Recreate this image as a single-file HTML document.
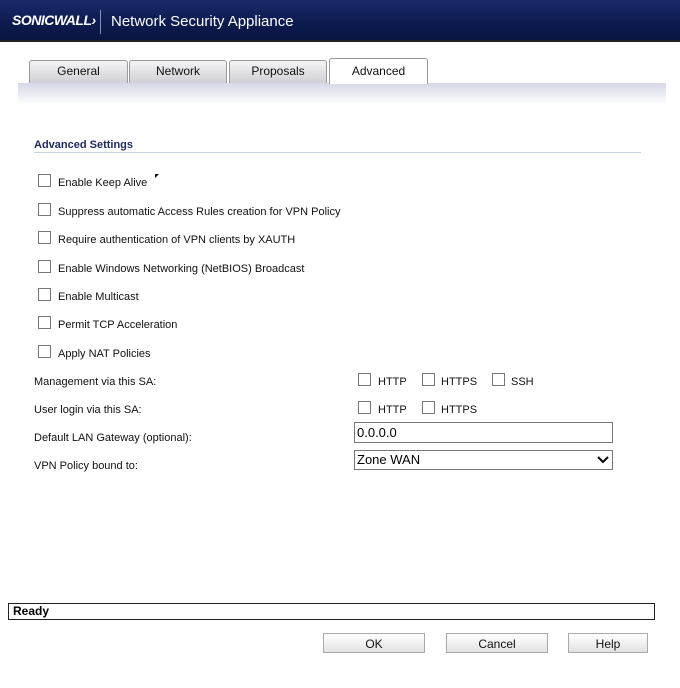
<!DOCTYPE html>
<html><head><style>
body{margin:0;width:680px;height:688px;background:#fff;position:relative;font-family:"Liberation Sans",Arial,sans-serif;overflow:hidden}
.a{position:absolute}
.hdr{left:0;top:0;width:680px;height:40px;background:linear-gradient(#1a2a6a,#0d1a4e 60%,#0a1540);border-bottom:2px solid #222}
.logo{left:12px;top:12px;color:#fff;font-weight:bold;font-style:italic;font-size:14px;letter-spacing:-0.5px}
.sep{left:100px;top:10px;width:1px;height:24px;background:#8890b0}
.title{left:111px;top:13px;color:#fff;font-size:15px}
.tab{top:60px;height:23px;border:1px solid #999;border-bottom:none;border-radius:3px 3px 0 0;background:linear-gradient(#f4f4f4,#cfcfd6);font-size:12px;text-align:center;line-height:20px;color:#111;box-sizing:border-box}
.band{left:18px;top:83px;width:648px;height:22px;background:linear-gradient(#d5d8e6,#fff)}
.cb{width:11px;height:11px;border:1px solid #777;background:#fff}
.t{font-size:11px;color:#111;white-space:nowrap}
.btn{top:633px;height:20px;border:1px solid #aaa;background:linear-gradient(#fff,#e2e2e2);font-size:12px;text-align:center;line-height:20px;box-sizing:border-box;color:#111}
</style></head><body>
<div class="a hdr"></div>
<div class="a logo">SONICWALL&#x203A;</div>
<div class="a sep"></div>
<div class="a title">Network Security Appliance</div>
<div class="a band"></div>
<div class="a tab" style="left:29px;width:99px">General</div>
<div class="a tab" style="left:129px;width:98px">Network</div>
<div class="a tab" style="left:229px;width:98px">Proposals</div>
<div class="a tab" style="left:329px;width:99px;top:58px;height:26px;background:#fff;line-height:24px">Advanced</div>
<div class="a" style="left:34px;top:139px;font-size:11px;font-weight:bold;color:#1c2a5a">Advanced Settings</div>
<div class="a" style="left:34px;top:152px;width:607px;height:1px;background:#c8d4e4"></div>
<div class="a" style="left:155px;top:174px;width:0;height:0;border-left:4px solid #000;border-bottom:4px solid transparent"></div>

<div class="a cb" style="left:38px;top:174px"></div><div class="a t" style="left:58px;top:177px">Enable Keep Alive</div>
<div class="a cb" style="left:38px;top:203px"></div><div class="a t" style="left:58px;top:206px">Suppress automatic Access Rules creation for VPN Policy</div>
<div class="a cb" style="left:38px;top:231px"></div><div class="a t" style="left:58px;top:234px">Require authentication of VPN clients by XAUTH</div>
<div class="a cb" style="left:38px;top:260px"></div><div class="a t" style="left:58px;top:263px">Enable Windows Networking (NetBIOS) Broadcast</div>
<div class="a cb" style="left:38px;top:288px"></div><div class="a t" style="left:58px;top:291px">Enable Multicast</div>
<div class="a cb" style="left:38px;top:316px"></div><div class="a t" style="left:58px;top:319px">Permit TCP Acceleration</div>
<div class="a cb" style="left:38px;top:345px"></div><div class="a t" style="left:58px;top:348px">Apply NAT Policies</div>

<div class="a t" style="left:34px;top:376px">Management via this SA:</div>
<div class="a t" style="left:34px;top:404px">User login via this SA:</div>
<div class="a t" style="left:34px;top:432px">Default LAN Gateway (optional):</div>
<div class="a t" style="left:34px;top:460px">VPN Policy bound to:</div>

<div class="a cb" style="left:358px;top:373px"></div><div class="a t" style="left:378px;top:376px">HTTP</div>
<div class="a cb" style="left:422px;top:373px"></div><div class="a t" style="left:441px;top:376px">HTTPS</div>
<div class="a cb" style="left:492px;top:373px"></div><div class="a t" style="left:511px;top:376px">SSH</div>
<div class="a cb" style="left:358px;top:401px"></div><div class="a t" style="left:378px;top:404px">HTTP</div>
<div class="a cb" style="left:422px;top:401px"></div><div class="a t" style="left:441px;top:404px">HTTPS</div>

<div class="a" style="left:354px;top:422px;width:259px;height:21px;border:1px solid #777;box-sizing:border-box;font-size:13px;padding-left:2px;line-height:19px">0.0.0.0</div>
<div class="a" style="left:354px;top:450px;width:259px;height:20px;border:1px solid #777;box-sizing:border-box;font-size:13px;padding-left:2px;line-height:18px">Zone WAN</div>
<svg class="a" style="left:597px;top:455px" width="12" height="10"><path d="M1 2 L6 7 L11 2" stroke="#000" stroke-width="2" fill="none"/></svg>

<div class="a" style="left:8px;top:603px;width:647px;height:17px;border:1px solid #222;box-sizing:border-box;font-size:12px;font-weight:bold;padding-left:4px;line-height:15px">Ready</div>
<div class="a btn" style="left:323px;width:102px">OK</div>
<div class="a btn" style="left:446px;width:102px">Cancel</div>
<div class="a btn" style="left:568px;width:80px">Help</div>
</body></html>
